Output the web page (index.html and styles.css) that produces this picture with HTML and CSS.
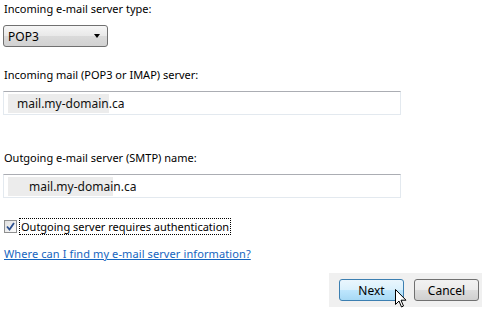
FILE: index.html
```html
<html>
<head><meta http-equiv="Content-Type" content="text/html; charset=utf-8">
<link rel="stylesheet" href="styles.css">
</head>
<body>
<div class="page">
  <div class="lbl first">Incoming e-mail server type:</div>
  <div class="sel">
    <span>POP3</span>
    <span class="arrow"></span>
  </div>

  <div class="lbl l2">Incoming mail (POP3 or IMAP) server:</div>
  <div class="fld fld1">mail.my-domain.ca</div>

  <div class="lbl l3">Outgoing e-mail server (SMTP) name:</div>
  <div class="fld fld2">mail.my-domain.ca</div>

  <div class="chkrow">
    <span class="chk">
      <svg width="9" height="9" viewBox="0 0 9 9"><path d="M1 4.5 L3.5 7.5 L8 1" fill="none" stroke="#2b4f8f" stroke-width="1.8"/></svg>
    </span>
    <span class="focus">Outgoing server requires authentication</span>
  </div>

  <a class="help" href="#">Where can I find my e-mail server information?</a>

  <div class="bottom">
    <div class="bar">
      <button class="btn next">Next</button>
      <button class="btn">Cancel</button>
      <svg class="cursor" width="12" height="20" viewBox="0 0 12 20">
        <path d="M0.5 0.5 L0.5 15.5 L4 12 L6.5 18 L8.5 17 L6 11.2 L11 11.2 Z" fill="#fff" stroke="#000" stroke-width="1"/>
      </svg>
    </div>
  </div>
</div>
</body>
</html>
```

FILE: styles.css
```css
body {
	margin: 0;
	background: #ffffff;
	font-family: "Noto Sans", "DejaVu Sans", sans-serif;
	font-size: 11px;
	color: #000000;
}
.page {
	padding: 0 0 0 3px;
	width: 482px;
	height: 318px;
	box-sizing: border-box;
}
.lbl {
	padding-left: 1px;
	height: 16px;
	line-height: 16px;
}
.lbl.first { padding-top: 1px; }
.lbl.l2 { margin-top: 20px; }
.lbl.l3 { margin-top: 35px; }

.sel {
	margin-top: 8px;
	width: 105px;
	height: 22px;
	box-sizing: border-box;
	border: 1px solid #707070;
	border-radius: 3px;
	background: linear-gradient(#f6f6f6, #e8e8e8 50%, #dadada 51%, #d2d2d2);
	display: flex;
	align-items: center;
	justify-content: space-between;
	padding: 0 7px 0 4px;
	font-size: 12px;
}
.arrow {
	width: 0;
	height: 0;
	border-left: 3.5px solid transparent;
	border-right: 3.5px solid transparent;
	border-top: 4px solid #000;
}

.fld {
	margin-top: 8px;
	width: 398px;
	height: 24px;
	box-sizing: border-box;
	border: 1px solid #e3e9ef;
	border-top-color: #abadb3;
	display: flex;
	align-items: center;
	font-size: 12px;
	color: #111;
	background-color: #fff;
	background-image: linear-gradient(#ececec, #ececec);
	background-repeat: no-repeat;
}
.fld1 {
	padding-left: 13px;
	background-position: 4px 2px;
	background-size: 101px 19px;
}
.fld2 {
	padding-left: 25px;
	background-position: 4px 2px;
	background-size: 105px 19px;
}

.chkrow {
	margin-top: 20px;
	display: flex;
	align-items: center;
	height: 17px;
}
.chk {
	width: 11px;
	height: 11px;
	margin-left: 1px;
	border: 1px solid #8e8f8f;
	background: linear-gradient(135deg, #e0e0e0, #fcfcfc);
	display: flex;
	align-items: center;
	justify-content: center;
}
.focus {
	margin-left: 2px;
	border: 1px dotted #000;
	padding: 0 1px;
	line-height: 15px;
}
.help {
	display: inline-block;
	margin-top: 11px;
	margin-left: 1px;
	color: #1565c0;
	text-decoration: underline;
	letter-spacing: 0.1px;
}
.bottom {
	margin-top: 12px;
	display: flex;
	justify-content: flex-end;
}
.bar {
	position: relative;
	background: #f0f0f0;
	width: 153px;
	height: 34px;
	display: flex;
	align-items: center;
	padding-left: 10px;
	gap: 10px;
	box-sizing: border-box;
}
.btn {
	width: 65px;
	height: 22px;
	border: 1px solid #707070;
	border-radius: 3px;
	background: linear-gradient(#f2f2f2, #ebebeb 50%, #dddddd 51%, #cfcfcf);
	font-family: "Noto Sans", "DejaVu Sans", sans-serif;
	font-size: 12px;
	color: #000;
	padding: 0;
}
.btn.next {
	border-color: #3c7fb1;
	background: linear-gradient(#eaf6fd, #d9f0fc 50%, #bee6fd 51%, #a7d9f5);
}
.cursor {
	position: absolute;
	left: 66px;
	top: 16px;
}
```
